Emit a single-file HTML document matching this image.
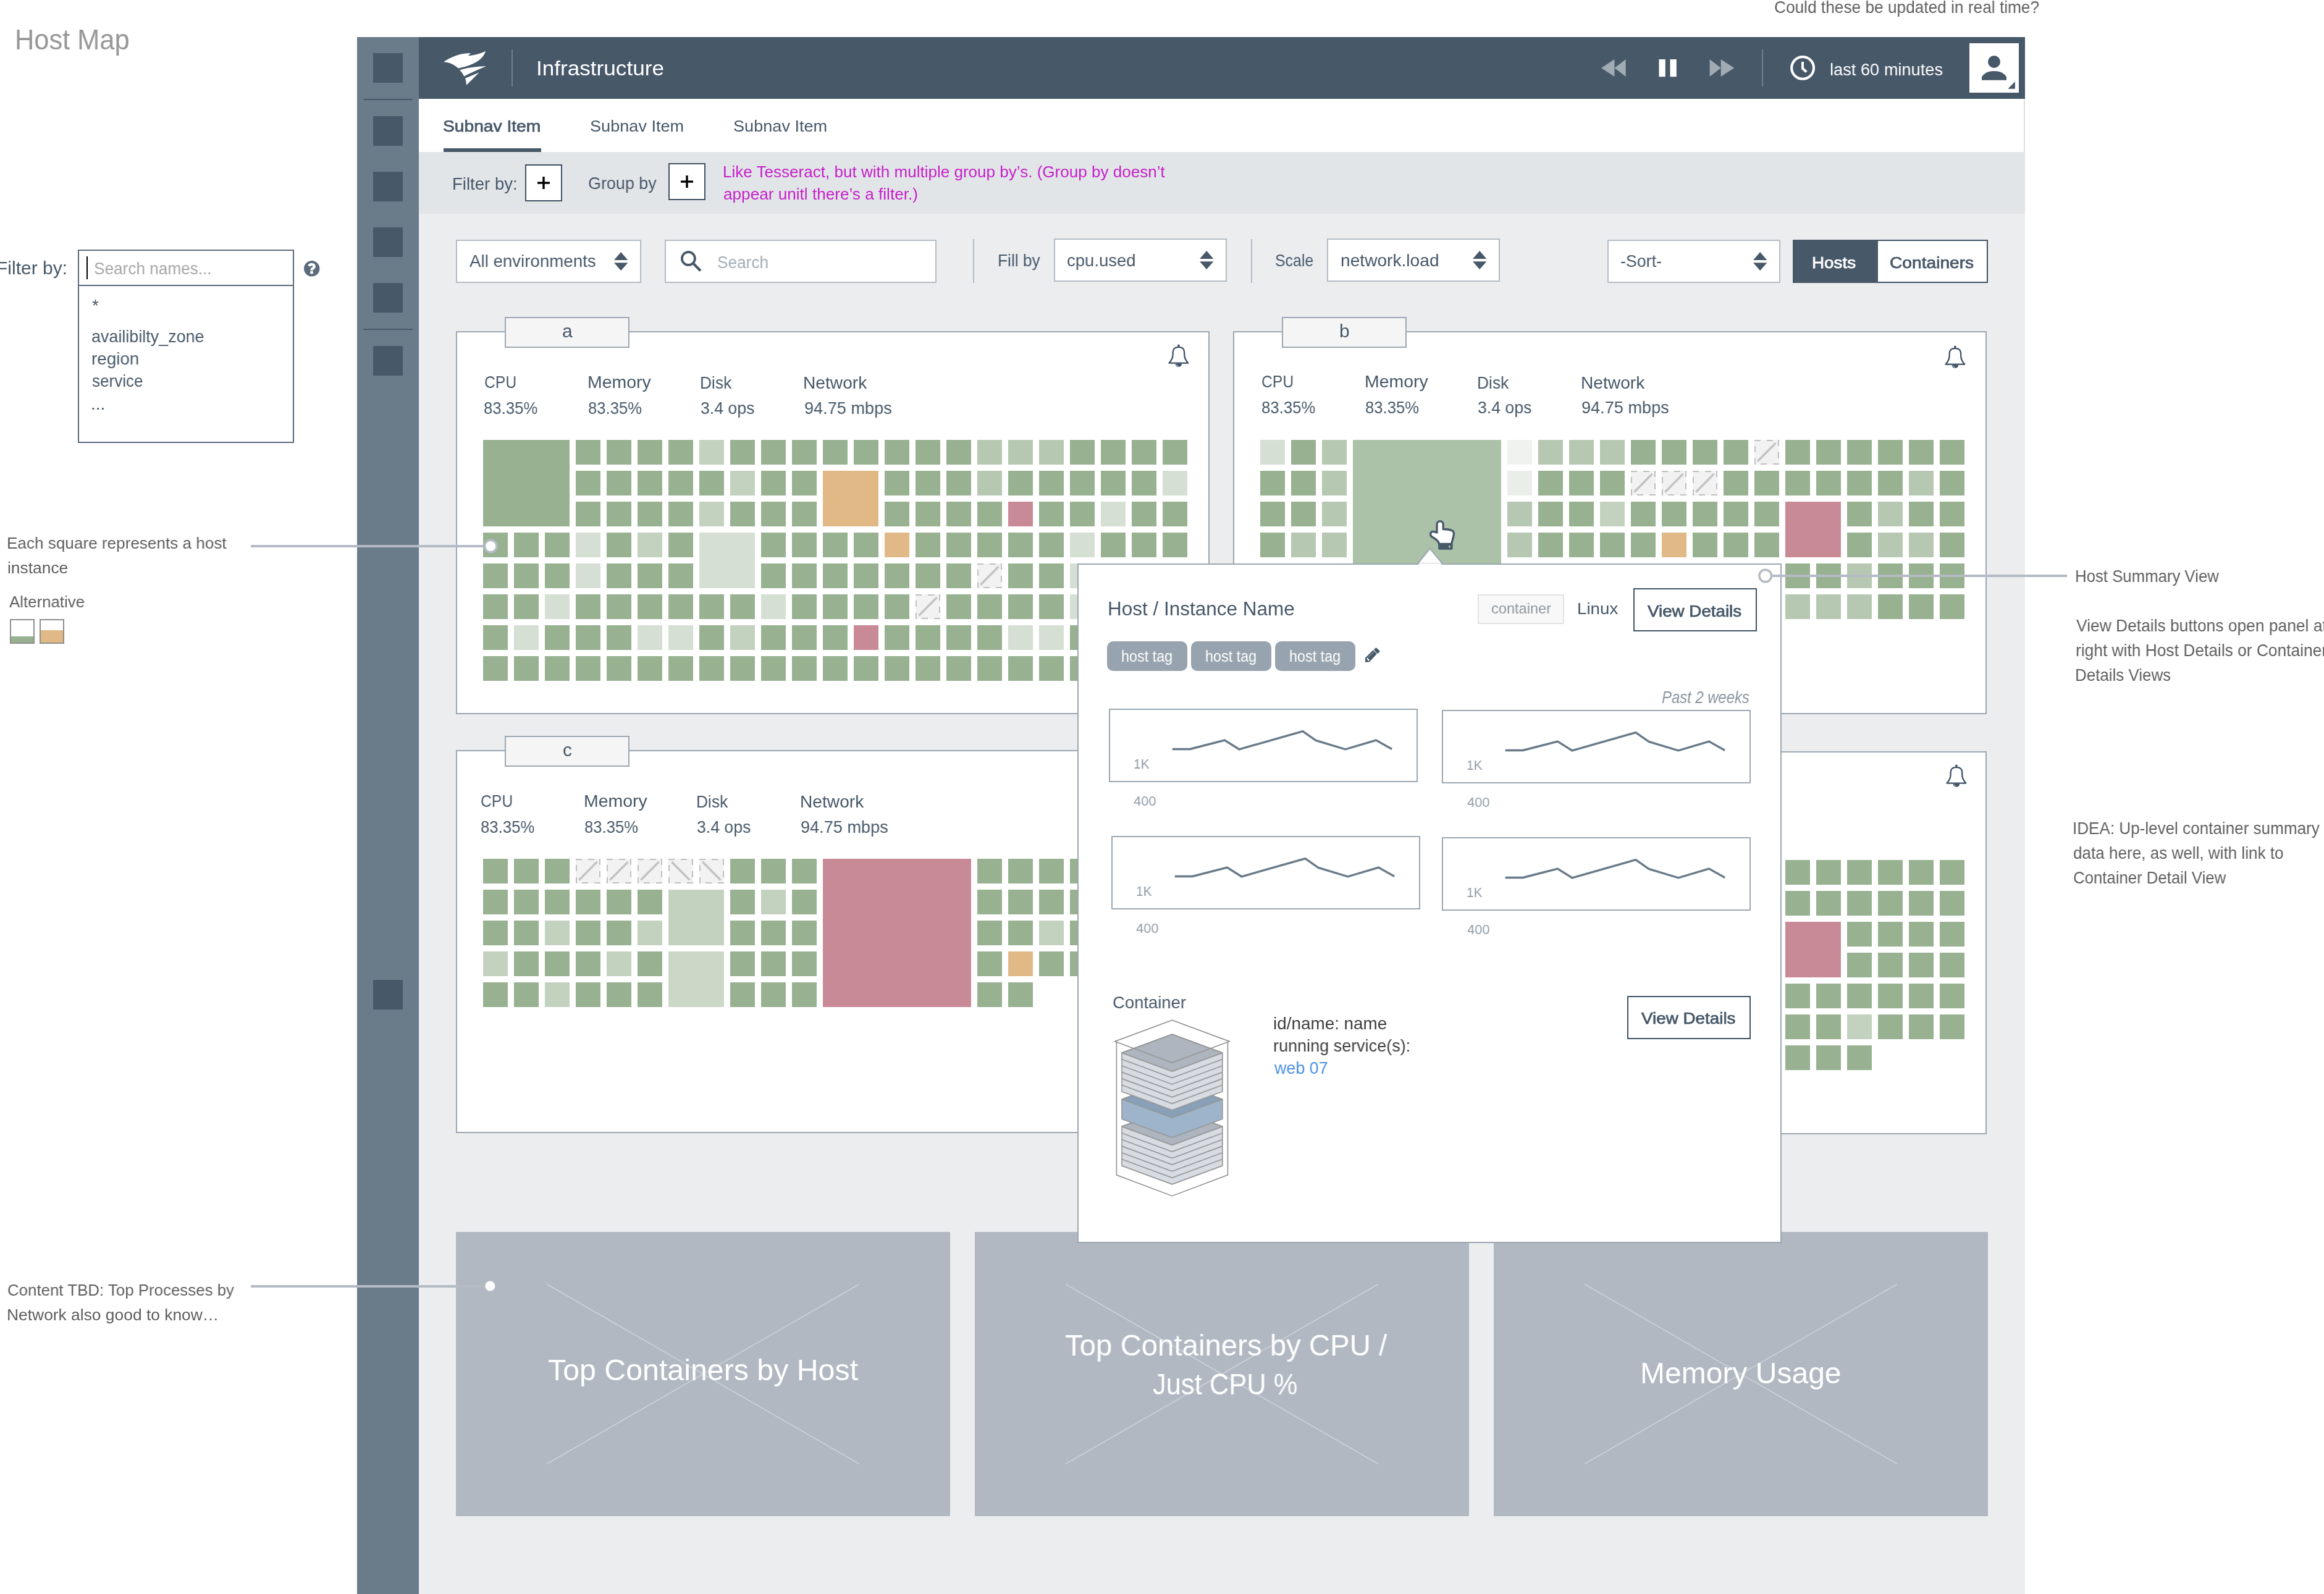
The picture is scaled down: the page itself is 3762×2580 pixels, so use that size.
<!DOCTYPE html>
<html><head><meta charset="utf-8"><title>Host Map</title>
<style>
html,body{margin:0;padding:0;}
body{width:3762px;height:2580px;position:relative;overflow:hidden;background:#fff;font-family:'Liberation Sans', sans-serif;}
.a{position:absolute;display:block;}
.t{position:absolute;white-space:nowrap;line-height:1;transform-origin:0 0;will-change:transform;}
</style></head><body>
<div class="a" style="left:578px;top:60px;width:100px;height:2520px;background:#6a7b8a;"></div>
<div class="a" style="left:604px;top:86px;width:48px;height:48px;background:#475869;"></div>
<div class="a" style="left:604px;top:188px;width:48px;height:48px;background:#475869;"></div>
<div class="a" style="left:604px;top:278px;width:48px;height:48px;background:#475869;"></div>
<div class="a" style="left:604px;top:368px;width:48px;height:48px;background:#475869;"></div>
<div class="a" style="left:604px;top:458px;width:48px;height:48px;background:#475869;"></div>
<div class="a" style="left:604px;top:560px;width:48px;height:48px;background:#475869;"></div>
<div class="a" style="left:604px;top:1586px;width:48px;height:48px;background:#475869;"></div>
<div class="a" style="left:588px;top:160px;width:80px;height:2px;background:#475869;"></div>
<div class="a" style="left:588px;top:532px;width:80px;height:2px;background:#475869;"></div>
<div class="a" style="left:678px;top:60px;width:2600px;height:100px;background:#475869;"></div>
<div class="a" style="left:678px;top:160px;width:2600px;height:86px;background:#ffffff;"></div>
<div class="a" style="left:3276px;top:160px;width:2px;height:86px;background:#dcdfe3;"></div>
<div class="a" style="left:678px;top:246px;width:2600px;height:100px;background:#e2e5e8;"></div>
<div class="a" style="left:678px;top:346px;width:2600px;height:2234px;background:#ebedef;"></div>
<svg class="a" style="left:700px;top:70px;" width="100" height="80" viewBox="0 0 100 80"><path fill="#fff" d="M18.2 30.3 C 30 22 45 16 62 16 L 57.8 20.3 C 70 19 80 16 86.4 12.4 C 80 30 62 36 41.7 40.6 C 36 35 28 31 18.2 30.3 Z"/><path fill="#fff" d="M44 43.4 C 60 39 75 37 87.1 37.2 C 75 42 62 48 51.3 53.4 C 49 49 47 46 44 43.4 Z"/><path fill="#fff" d="M53 56.8 L 75.7 47.2 L 55.1 67.8 C 55 64 54 60 53 56.8 Z"/></svg>
<div class="a" style="left:828px;top:80px;width:2px;height:60px;background:#6f7f8e;"></div>
<div class="t" id="t0" style="left:867.88px;top:93.77px;font-size:33.8px;color:#ffffff;transform:scaleX(1.0394);">Infrastructure</div>
<svg class="a" style="left:2592.3px;top:96px;" width="220" height="30" viewBox="0 0 220 30"><polygon fill="#a1abb4" points="0,14 21.5,0 21.5,28"/><polygon fill="#a1abb4" points="21.5,14 39.7,0 39.7,28"/><rect fill="#fff" x="93.5" y="0" width="10.3" height="28.2"/><rect fill="#fff" x="111.5" y="0" width="10.3" height="28.2"/><polygon fill="#a1abb4" points="175.6,0 193.7,14 175.6,28"/><polygon fill="#a1abb4" points="193.7,0 215.3,14 193.7,28"/></svg>
<div class="a" style="left:2852px;top:80px;width:2px;height:60px;background:#6f7f8e;"></div>
<svg class="a" style="left:2898px;top:90px;" width="40" height="40" viewBox="0 0 40 40"><circle cx="20.1" cy="19.9" r="17.9" fill="none" stroke="#fff" stroke-width="4.1"/><polyline points="20,9.9 20,20.8 26.3,26.4" fill="none" stroke="#fff" stroke-width="4"/></svg>
<div class="t" id="t1" style="left:2962.03px;top:97.93px;font-size:28.2px;color:#ffffff;transform:scaleX(0.9656);">last 60 minutes</div>
<div class="a" style="left:3188px;top:70px;width:80px;height:80px;background:#ffffff;"></div>
<svg class="a" style="left:3188px;top:70px;" width="80" height="80" viewBox="0 0 80 80"><circle cx="40" cy="30" r="10" fill="#475869"/><path fill="#475869" d="M20 54.6 C 24 48 31 45 40 45 C 49 45 56 48 60 54.6 L 60 59.8 L 20 59.8 Z"/><polygon fill="#475869" points="62.3,73.8 73.9,62.1 73.9,73.8"/></svg>
<div class="t" id="t2" style="left:716.94px;top:191.19px;font-size:26.6px;color:#475869;-webkit-text-stroke:0.75px currentColor;transform:scaleX(1.0601);">Subnav Item</div>
<div class="t" id="t3" style="left:954.98px;top:191.19px;font-size:26.6px;color:#475869;transform:scaleX(1.0194);">Subnav Item</div>
<div class="t" id="t4" style="left:1186.98px;top:191.19px;font-size:26.6px;color:#475869;transform:scaleX(1.0194);">Subnav Item</div>
<div class="a" style="left:718px;top:240px;width:158px;height:6px;background:#475869;"></div>
<div class="t" id="t5" style="left:732.00px;top:283.73px;font-size:27.5px;color:#475869;transform:scaleX(1.0020);">Filter by:</div>
<div class="a" style="left:850px;top:266px;width:60px;height:60px;background:#fff;border:2px solid #3e5266;box-sizing:border-box;"></div>
<svg class="a" style="left:870px;top:286px;" width="20" height="20" viewBox="0 0 20 20"><rect x="0" y="8.3" width="20" height="3.4" fill="#000"/><rect x="8.3" y="0" width="3.4" height="20" fill="#000"/></svg>
<div class="t" id="t6" style="left:952.02px;top:283.12px;font-size:27.5px;color:#475869;transform:scaleX(0.9790);">Group by</div>
<div class="a" style="left:1082px;top:264px;width:60px;height:60px;background:#fff;border:2px solid #3e5266;box-sizing:border-box;"></div>
<svg class="a" style="left:1102px;top:284px;" width="20" height="20" viewBox="0 0 20 20"><rect x="0" y="8.3" width="20" height="3.4" fill="#000"/><rect x="8.3" y="0" width="3.4" height="20" fill="#000"/></svg>
<div class="t" id="t7" style="left:1169.96px;top:266.32px;font-size:25.5px;color:#c61fca;transform:scaleX(1.0214);">Like Tesseract, but with multiple group by’s. (Group by doesn’t</div>
<div class="t" id="t8" style="left:1170.97px;top:301.82px;font-size:25.5px;color:#c61fca;transform:scaleX(1.0255);">appear unitl there’s a filter.)</div>
<div class="a" style="left:738px;top:388px;width:300px;height:70px;background:#fff;border:2px solid #b3bcc5;box-sizing:border-box;"></div>
<div class="t" id="t9" style="left:760.00px;top:409.10px;font-size:28px;color:#475869;transform:scaleX(0.9885);">All environments</div>
<svg class="a" style="left:993.8px;top:408px;" width="23" height="31" viewBox="0 0 23 31"><polygon fill="#475869" points="0,13 11.2,0 22.4,13"/><polygon fill="#475869" points="0,17.2 22.4,17.2 11.2,30"/></svg>
<div class="a" style="left:1076px;top:388px;width:440px;height:70px;background:#fff;border:2px solid #b3bcc5;box-sizing:border-box;"></div>
<svg class="a" style="left:1102px;top:406px;" width="36" height="36" viewBox="0 0 36 36"><circle cx="12.4" cy="12.4" r="10.5" fill="none" stroke="#475869" stroke-width="3.8"/><line x1="20" y1="20.3" x2="32" y2="32.3" stroke="#475869" stroke-width="4.2"/></svg>
<div class="t" id="t10" style="left:1161.06px;top:410.70px;font-size:28px;color:#a3adb7;transform:scaleX(0.9356);">Search</div>
<div class="a" style="left:1575px;top:387px;width:2px;height:71px;background:#b3bcc5;"></div>
<div class="t" id="t11" style="left:1615.09px;top:408.12px;font-size:27.5px;color:#475869;transform:scaleX(0.9563);">Fill by</div>
<div class="a" style="left:1706px;top:386px;width:280px;height:70px;background:#fff;border:2px solid #b3bcc5;box-sizing:border-box;"></div>
<div class="t" id="t12" style="left:1727.02px;top:407.70px;font-size:28px;color:#475869;transform:scaleX(0.9814);">cpu.used</div>
<svg class="a" style="left:1941.5px;top:406px;" width="23" height="31" viewBox="0 0 23 31"><polygon fill="#475869" points="0,13 11.2,0 22.4,13"/><polygon fill="#475869" points="0,17.2 22.4,17.2 11.2,30"/></svg>
<div class="a" style="left:2025px;top:387px;width:2px;height:71px;background:#b3bcc5;"></div>
<div class="t" id="t13" style="left:2063.70px;top:408.12px;font-size:27.5px;color:#475869;transform:scaleX(0.9038);">Scale</div>
<div class="a" style="left:2148px;top:386px;width:280px;height:70px;background:#fff;border:2px solid #b3bcc5;box-sizing:border-box;"></div>
<div class="t" id="t14" style="left:2169.59px;top:407.70px;font-size:28px;color:#475869;transform:scaleX(1.0052);">network.load</div>
<svg class="a" style="left:2383.6px;top:406px;" width="23" height="31" viewBox="0 0 23 31"><polygon fill="#475869" points="0,13 11.2,0 22.4,13"/><polygon fill="#475869" points="0,17.2 22.4,17.2 11.2,30"/></svg>
<div class="a" style="left:2602px;top:388px;width:280px;height:70px;background:#fff;border:2px solid #b3bcc5;box-sizing:border-box;"></div>
<div class="t" id="t15" style="left:2623.04px;top:408.70px;font-size:28px;color:#475869;transform:scaleX(0.9567);">-Sort-</div>
<svg class="a" style="left:2837.5px;top:408px;" width="23" height="31" viewBox="0 0 23 31"><polygon fill="#475869" points="0,13 11.2,0 22.4,13"/><polygon fill="#475869" points="0,17.2 22.4,17.2 11.2,30"/></svg>
<div class="a" style="left:2902px;top:388px;width:316px;height:70px;background:#fff;border:2px solid #3e5266;box-sizing:border-box;"></div>
<div class="a" style="left:2902px;top:388px;width:138px;height:70px;background:#475869;"></div>
<div class="t" id="t16" style="left:2932.87px;top:411.83px;font-size:26.2px;color:#ffffff;-webkit-text-stroke:0.75px currentColor;transform:scaleX(1.0641);">Hosts</div>
<div class="t" id="t17" style="left:3058.92px;top:411.83px;font-size:26.2px;color:#475869;-webkit-text-stroke:0.75px currentColor;transform:scaleX(1.0753);">Containers</div>
<div class="a" style="left:738px;top:536px;width:1220px;height:620px;background:#fff;border:2px solid #9ba7b2;box-sizing:border-box;"></div>
<div class="a" style="left:817px;top:513px;width:202px;height:50px;background:#f5f5f5;border:2px solid #9ba7b2;box-sizing:border-box;"></div>
<div class="t" id="t18" style="left:909.66px;top:521.40px;font-size:30px;color:#475869;">a</div>
<svg class="a" style="left:1880px;top:550px;" width="56" height="50" viewBox="0 0 56 50"><path d="M12.5 37.6 Q 18.6 31 18.6 24 L 18.6 20.5 Q 18.6 11.9 27.9 11.9 Q 37.2 11.9 37.2 20.5 L 37.2 24 Q 37.2 31 43.3 37.6 Z" fill="none" stroke="#3f5266" stroke-width="2.3" stroke-linejoin="round"/><circle cx="27.9" cy="9.3" r="1.9" fill="#3f5266"/><path d="M22.6 38.5 A 5.3 5.3 0 0 0 33.2 38.5 Z" fill="#3f5266"/><path d="M24.3 39.6 Q 24.9 41.9 27.4 42.4" fill="none" stroke="#fff" stroke-width="0.8"/></svg>
<div class="t" id="t19" style="left:783.50px;top:604.62px;font-size:27.5px;color:#475869;transform:scaleX(0.8985);">CPU</div>
<div class="t" id="t20" style="left:783.46px;top:646.82px;font-size:27.5px;color:#475869;transform:scaleX(0.9366);">83.35%</div>
<div class="t" id="t21" style="left:950.63px;top:604.62px;font-size:27.5px;color:#475869;transform:scaleX(1.0352);">Memory</div>
<div class="t" id="t22" style="left:951.77px;top:646.82px;font-size:27.5px;color:#475869;transform:scaleX(0.9334);">83.35%</div>
<div class="t" id="t23" style="left:1132.88px;top:606.42px;font-size:27.5px;color:#475869;transform:scaleX(0.9590);">Disk</div>
<div class="t" id="t24" style="left:1133.83px;top:646.82px;font-size:27.5px;color:#475869;transform:scaleX(0.9688);">3.4 ops</div>
<div class="t" id="t25" style="left:1300.45px;top:606.42px;font-size:27.5px;color:#475869;transform:scaleX(1.0242);">Network</div>
<div class="t" id="t26" style="left:1301.51px;top:646.82px;font-size:27.5px;color:#475869;transform:scaleX(0.9862);">94.75 mbps</div>
<div class="a" style="left:782px;top:712px;width:140px;height:140px;background:#97b191;"></div>
<div class="a" style="left:1132px;top:712px;width:40px;height:40px;background:#c3d1bf;"></div>
<div class="a" style="left:1582px;top:712px;width:40px;height:40px;background:#b6c8b2;"></div>
<div class="a" style="left:1632px;top:712px;width:40px;height:40px;background:#b6c8b2;"></div>
<div class="a" style="left:1682px;top:712px;width:40px;height:40px;background:#b6c8b2;"></div>
<div class="a" style="left:1182px;top:762px;width:40px;height:40px;background:#c3d1bf;"></div>
<div class="a" style="left:1332px;top:762px;width:90px;height:90px;background:#e0b987;"></div>
<div class="a" style="left:1582px;top:762px;width:40px;height:40px;background:#b6c8b2;"></div>
<div class="a" style="left:1882px;top:762px;width:40px;height:40px;background:#d5dfd3;"></div>
<div class="a" style="left:1132px;top:812px;width:40px;height:40px;background:#c3d1bf;"></div>
<div class="a" style="left:1632px;top:812px;width:40px;height:40px;background:#c98a98;"></div>
<div class="a" style="left:1782px;top:812px;width:40px;height:40px;background:#d5dfd3;"></div>
<div class="a" style="left:932px;top:862px;width:40px;height:40px;background:#d5dfd3;"></div>
<div class="a" style="left:1032px;top:862px;width:40px;height:40px;background:#c3d1bf;"></div>
<div class="a" style="left:1132px;top:862px;width:90px;height:90px;background:#d5dfd3;"></div>
<div class="a" style="left:1432px;top:862px;width:40px;height:40px;background:#e0b987;"></div>
<div class="a" style="left:1732px;top:862px;width:40px;height:40px;background:#d5dfd3;"></div>
<div class="a" style="left:932px;top:912px;width:40px;height:40px;background:#d5dfd3;"></div>
<svg class="a" style="left:1582px;top:912px;" width="40" height="40" viewBox="0 0 40 40"><rect x="0" y="0" width="40" height="40" fill="#f2f2f2"/><line x1="0" y1="1" x2="40" y2="1" stroke="#bfbfbf" stroke-width="2" stroke-dasharray="10 10"/><line x1="39" y1="0" x2="39" y2="40" stroke="#bfbfbf" stroke-width="2" stroke-dasharray="10 10"/><line x1="40" y1="39" x2="0" y2="39" stroke="#bfbfbf" stroke-width="2" stroke-dasharray="10 10"/><line x1="1" y1="40" x2="1" y2="0" stroke="#bfbfbf" stroke-width="2" stroke-dasharray="10 10"/><line x1="5.3" y1="34.5" x2="34.5" y2="5" stroke="#c3c3c3" stroke-width="3.5"/></svg>
<div class="a" style="left:1732px;top:912px;width:40px;height:40px;background:#d5dfd3;"></div>
<div class="a" style="left:882px;top:962px;width:40px;height:40px;background:#d5dfd3;"></div>
<div class="a" style="left:1232px;top:962px;width:40px;height:40px;background:#d5dfd3;"></div>
<svg class="a" style="left:1482px;top:962px;" width="40" height="40" viewBox="0 0 40 40"><rect x="0" y="0" width="40" height="40" fill="#f2f2f2"/><line x1="0" y1="1" x2="40" y2="1" stroke="#bfbfbf" stroke-width="2" stroke-dasharray="10 10"/><line x1="39" y1="0" x2="39" y2="40" stroke="#bfbfbf" stroke-width="2" stroke-dasharray="10 10"/><line x1="40" y1="39" x2="0" y2="39" stroke="#bfbfbf" stroke-width="2" stroke-dasharray="10 10"/><line x1="1" y1="40" x2="1" y2="0" stroke="#bfbfbf" stroke-width="2" stroke-dasharray="10 10"/><line x1="5.3" y1="34.5" x2="34.5" y2="5" stroke="#c3c3c3" stroke-width="3.5"/></svg>
<div class="a" style="left:1732px;top:962px;width:40px;height:40px;background:#d5dfd3;"></div>
<div class="a" style="left:832px;top:1012px;width:40px;height:40px;background:#d5dfd3;"></div>
<div class="a" style="left:1032px;top:1012px;width:40px;height:40px;background:#d5dfd3;"></div>
<div class="a" style="left:1082px;top:1012px;width:40px;height:40px;background:#d5dfd3;"></div>
<div class="a" style="left:1182px;top:1012px;width:40px;height:40px;background:#c3d1bf;"></div>
<div class="a" style="left:1382px;top:1012px;width:40px;height:40px;background:#c98a98;"></div>
<div class="a" style="left:1632px;top:1012px;width:40px;height:40px;background:#d5dfd3;"></div>
<div class="a" style="left:1682px;top:1012px;width:40px;height:40px;background:#d5dfd3;"></div>
<div class="a" style="left:932px;top:712px;width:40px;height:40px;background:#97b191;"></div>
<div class="a" style="left:982px;top:712px;width:40px;height:40px;background:#97b191;"></div>
<div class="a" style="left:1032px;top:712px;width:40px;height:40px;background:#97b191;"></div>
<div class="a" style="left:1082px;top:712px;width:40px;height:40px;background:#97b191;"></div>
<div class="a" style="left:1182px;top:712px;width:40px;height:40px;background:#97b191;"></div>
<div class="a" style="left:1232px;top:712px;width:40px;height:40px;background:#97b191;"></div>
<div class="a" style="left:1282px;top:712px;width:40px;height:40px;background:#97b191;"></div>
<div class="a" style="left:1332px;top:712px;width:40px;height:40px;background:#97b191;"></div>
<div class="a" style="left:1382px;top:712px;width:40px;height:40px;background:#97b191;"></div>
<div class="a" style="left:1432px;top:712px;width:40px;height:40px;background:#97b191;"></div>
<div class="a" style="left:1482px;top:712px;width:40px;height:40px;background:#97b191;"></div>
<div class="a" style="left:1532px;top:712px;width:40px;height:40px;background:#97b191;"></div>
<div class="a" style="left:1732px;top:712px;width:40px;height:40px;background:#97b191;"></div>
<div class="a" style="left:1782px;top:712px;width:40px;height:40px;background:#97b191;"></div>
<div class="a" style="left:1832px;top:712px;width:40px;height:40px;background:#97b191;"></div>
<div class="a" style="left:1882px;top:712px;width:40px;height:40px;background:#97b191;"></div>
<div class="a" style="left:932px;top:762px;width:40px;height:40px;background:#97b191;"></div>
<div class="a" style="left:982px;top:762px;width:40px;height:40px;background:#97b191;"></div>
<div class="a" style="left:1032px;top:762px;width:40px;height:40px;background:#97b191;"></div>
<div class="a" style="left:1082px;top:762px;width:40px;height:40px;background:#97b191;"></div>
<div class="a" style="left:1132px;top:762px;width:40px;height:40px;background:#97b191;"></div>
<div class="a" style="left:1232px;top:762px;width:40px;height:40px;background:#97b191;"></div>
<div class="a" style="left:1282px;top:762px;width:40px;height:40px;background:#97b191;"></div>
<div class="a" style="left:1432px;top:762px;width:40px;height:40px;background:#97b191;"></div>
<div class="a" style="left:1482px;top:762px;width:40px;height:40px;background:#97b191;"></div>
<div class="a" style="left:1532px;top:762px;width:40px;height:40px;background:#97b191;"></div>
<div class="a" style="left:1632px;top:762px;width:40px;height:40px;background:#97b191;"></div>
<div class="a" style="left:1682px;top:762px;width:40px;height:40px;background:#97b191;"></div>
<div class="a" style="left:1732px;top:762px;width:40px;height:40px;background:#97b191;"></div>
<div class="a" style="left:1782px;top:762px;width:40px;height:40px;background:#97b191;"></div>
<div class="a" style="left:1832px;top:762px;width:40px;height:40px;background:#97b191;"></div>
<div class="a" style="left:932px;top:812px;width:40px;height:40px;background:#97b191;"></div>
<div class="a" style="left:982px;top:812px;width:40px;height:40px;background:#97b191;"></div>
<div class="a" style="left:1032px;top:812px;width:40px;height:40px;background:#97b191;"></div>
<div class="a" style="left:1082px;top:812px;width:40px;height:40px;background:#97b191;"></div>
<div class="a" style="left:1182px;top:812px;width:40px;height:40px;background:#97b191;"></div>
<div class="a" style="left:1232px;top:812px;width:40px;height:40px;background:#97b191;"></div>
<div class="a" style="left:1282px;top:812px;width:40px;height:40px;background:#97b191;"></div>
<div class="a" style="left:1432px;top:812px;width:40px;height:40px;background:#97b191;"></div>
<div class="a" style="left:1482px;top:812px;width:40px;height:40px;background:#97b191;"></div>
<div class="a" style="left:1532px;top:812px;width:40px;height:40px;background:#97b191;"></div>
<div class="a" style="left:1582px;top:812px;width:40px;height:40px;background:#97b191;"></div>
<div class="a" style="left:1682px;top:812px;width:40px;height:40px;background:#97b191;"></div>
<div class="a" style="left:1732px;top:812px;width:40px;height:40px;background:#97b191;"></div>
<div class="a" style="left:1832px;top:812px;width:40px;height:40px;background:#97b191;"></div>
<div class="a" style="left:1882px;top:812px;width:40px;height:40px;background:#97b191;"></div>
<div class="a" style="left:782px;top:862px;width:40px;height:40px;background:#97b191;"></div>
<div class="a" style="left:832px;top:862px;width:40px;height:40px;background:#97b191;"></div>
<div class="a" style="left:882px;top:862px;width:40px;height:40px;background:#97b191;"></div>
<div class="a" style="left:982px;top:862px;width:40px;height:40px;background:#97b191;"></div>
<div class="a" style="left:1082px;top:862px;width:40px;height:40px;background:#97b191;"></div>
<div class="a" style="left:1232px;top:862px;width:40px;height:40px;background:#97b191;"></div>
<div class="a" style="left:1282px;top:862px;width:40px;height:40px;background:#97b191;"></div>
<div class="a" style="left:1332px;top:862px;width:40px;height:40px;background:#97b191;"></div>
<div class="a" style="left:1382px;top:862px;width:40px;height:40px;background:#97b191;"></div>
<div class="a" style="left:1482px;top:862px;width:40px;height:40px;background:#97b191;"></div>
<div class="a" style="left:1532px;top:862px;width:40px;height:40px;background:#97b191;"></div>
<div class="a" style="left:1582px;top:862px;width:40px;height:40px;background:#97b191;"></div>
<div class="a" style="left:1632px;top:862px;width:40px;height:40px;background:#97b191;"></div>
<div class="a" style="left:1682px;top:862px;width:40px;height:40px;background:#97b191;"></div>
<div class="a" style="left:1782px;top:862px;width:40px;height:40px;background:#97b191;"></div>
<div class="a" style="left:1832px;top:862px;width:40px;height:40px;background:#97b191;"></div>
<div class="a" style="left:1882px;top:862px;width:40px;height:40px;background:#97b191;"></div>
<div class="a" style="left:782px;top:912px;width:40px;height:40px;background:#97b191;"></div>
<div class="a" style="left:832px;top:912px;width:40px;height:40px;background:#97b191;"></div>
<div class="a" style="left:882px;top:912px;width:40px;height:40px;background:#97b191;"></div>
<div class="a" style="left:982px;top:912px;width:40px;height:40px;background:#97b191;"></div>
<div class="a" style="left:1032px;top:912px;width:40px;height:40px;background:#97b191;"></div>
<div class="a" style="left:1082px;top:912px;width:40px;height:40px;background:#97b191;"></div>
<div class="a" style="left:1232px;top:912px;width:40px;height:40px;background:#97b191;"></div>
<div class="a" style="left:1282px;top:912px;width:40px;height:40px;background:#97b191;"></div>
<div class="a" style="left:1332px;top:912px;width:40px;height:40px;background:#97b191;"></div>
<div class="a" style="left:1382px;top:912px;width:40px;height:40px;background:#97b191;"></div>
<div class="a" style="left:1432px;top:912px;width:40px;height:40px;background:#97b191;"></div>
<div class="a" style="left:1482px;top:912px;width:40px;height:40px;background:#97b191;"></div>
<div class="a" style="left:1532px;top:912px;width:40px;height:40px;background:#97b191;"></div>
<div class="a" style="left:1632px;top:912px;width:40px;height:40px;background:#97b191;"></div>
<div class="a" style="left:1682px;top:912px;width:40px;height:40px;background:#97b191;"></div>
<div class="a" style="left:1782px;top:912px;width:40px;height:40px;background:#97b191;"></div>
<div class="a" style="left:1832px;top:912px;width:40px;height:40px;background:#97b191;"></div>
<div class="a" style="left:1882px;top:912px;width:40px;height:40px;background:#97b191;"></div>
<div class="a" style="left:782px;top:962px;width:40px;height:40px;background:#97b191;"></div>
<div class="a" style="left:832px;top:962px;width:40px;height:40px;background:#97b191;"></div>
<div class="a" style="left:932px;top:962px;width:40px;height:40px;background:#97b191;"></div>
<div class="a" style="left:982px;top:962px;width:40px;height:40px;background:#97b191;"></div>
<div class="a" style="left:1032px;top:962px;width:40px;height:40px;background:#97b191;"></div>
<div class="a" style="left:1082px;top:962px;width:40px;height:40px;background:#97b191;"></div>
<div class="a" style="left:1132px;top:962px;width:40px;height:40px;background:#97b191;"></div>
<div class="a" style="left:1182px;top:962px;width:40px;height:40px;background:#97b191;"></div>
<div class="a" style="left:1282px;top:962px;width:40px;height:40px;background:#97b191;"></div>
<div class="a" style="left:1332px;top:962px;width:40px;height:40px;background:#97b191;"></div>
<div class="a" style="left:1382px;top:962px;width:40px;height:40px;background:#97b191;"></div>
<div class="a" style="left:1432px;top:962px;width:40px;height:40px;background:#97b191;"></div>
<div class="a" style="left:1532px;top:962px;width:40px;height:40px;background:#97b191;"></div>
<div class="a" style="left:1582px;top:962px;width:40px;height:40px;background:#97b191;"></div>
<div class="a" style="left:1632px;top:962px;width:40px;height:40px;background:#97b191;"></div>
<div class="a" style="left:1682px;top:962px;width:40px;height:40px;background:#97b191;"></div>
<div class="a" style="left:1782px;top:962px;width:40px;height:40px;background:#97b191;"></div>
<div class="a" style="left:1832px;top:962px;width:40px;height:40px;background:#97b191;"></div>
<div class="a" style="left:1882px;top:962px;width:40px;height:40px;background:#97b191;"></div>
<div class="a" style="left:782px;top:1012px;width:40px;height:40px;background:#97b191;"></div>
<div class="a" style="left:882px;top:1012px;width:40px;height:40px;background:#97b191;"></div>
<div class="a" style="left:932px;top:1012px;width:40px;height:40px;background:#97b191;"></div>
<div class="a" style="left:982px;top:1012px;width:40px;height:40px;background:#97b191;"></div>
<div class="a" style="left:1132px;top:1012px;width:40px;height:40px;background:#97b191;"></div>
<div class="a" style="left:1232px;top:1012px;width:40px;height:40px;background:#97b191;"></div>
<div class="a" style="left:1282px;top:1012px;width:40px;height:40px;background:#97b191;"></div>
<div class="a" style="left:1332px;top:1012px;width:40px;height:40px;background:#97b191;"></div>
<div class="a" style="left:1432px;top:1012px;width:40px;height:40px;background:#97b191;"></div>
<div class="a" style="left:1482px;top:1012px;width:40px;height:40px;background:#97b191;"></div>
<div class="a" style="left:1532px;top:1012px;width:40px;height:40px;background:#97b191;"></div>
<div class="a" style="left:1582px;top:1012px;width:40px;height:40px;background:#97b191;"></div>
<div class="a" style="left:1732px;top:1012px;width:40px;height:40px;background:#97b191;"></div>
<div class="a" style="left:1782px;top:1012px;width:40px;height:40px;background:#97b191;"></div>
<div class="a" style="left:1832px;top:1012px;width:40px;height:40px;background:#97b191;"></div>
<div class="a" style="left:1882px;top:1012px;width:40px;height:40px;background:#97b191;"></div>
<div class="a" style="left:782px;top:1062px;width:40px;height:40px;background:#97b191;"></div>
<div class="a" style="left:832px;top:1062px;width:40px;height:40px;background:#97b191;"></div>
<div class="a" style="left:882px;top:1062px;width:40px;height:40px;background:#97b191;"></div>
<div class="a" style="left:932px;top:1062px;width:40px;height:40px;background:#97b191;"></div>
<div class="a" style="left:982px;top:1062px;width:40px;height:40px;background:#97b191;"></div>
<div class="a" style="left:1032px;top:1062px;width:40px;height:40px;background:#97b191;"></div>
<div class="a" style="left:1082px;top:1062px;width:40px;height:40px;background:#97b191;"></div>
<div class="a" style="left:1132px;top:1062px;width:40px;height:40px;background:#97b191;"></div>
<div class="a" style="left:1182px;top:1062px;width:40px;height:40px;background:#97b191;"></div>
<div class="a" style="left:1232px;top:1062px;width:40px;height:40px;background:#97b191;"></div>
<div class="a" style="left:1282px;top:1062px;width:40px;height:40px;background:#97b191;"></div>
<div class="a" style="left:1332px;top:1062px;width:40px;height:40px;background:#97b191;"></div>
<div class="a" style="left:1382px;top:1062px;width:40px;height:40px;background:#97b191;"></div>
<div class="a" style="left:1432px;top:1062px;width:40px;height:40px;background:#97b191;"></div>
<div class="a" style="left:1482px;top:1062px;width:40px;height:40px;background:#97b191;"></div>
<div class="a" style="left:1532px;top:1062px;width:40px;height:40px;background:#97b191;"></div>
<div class="a" style="left:1582px;top:1062px;width:40px;height:40px;background:#97b191;"></div>
<div class="a" style="left:1632px;top:1062px;width:40px;height:40px;background:#97b191;"></div>
<div class="a" style="left:1682px;top:1062px;width:40px;height:40px;background:#97b191;"></div>
<div class="a" style="left:1732px;top:1062px;width:40px;height:40px;background:#97b191;"></div>
<div class="a" style="left:1782px;top:1062px;width:40px;height:40px;background:#97b191;"></div>
<div class="a" style="left:1832px;top:1062px;width:40px;height:40px;background:#97b191;"></div>
<div class="a" style="left:1882px;top:1062px;width:40px;height:40px;background:#97b191;"></div>
<div class="a" style="left:1996px;top:536px;width:1220px;height:620px;background:#fff;border:2px solid #9ba7b2;box-sizing:border-box;"></div>
<div class="a" style="left:2075px;top:513px;width:202px;height:50px;background:#f5f5f5;border:2px solid #9ba7b2;box-sizing:border-box;"></div>
<div class="t" id="t27" style="left:2167.66px;top:521.40px;font-size:30px;color:#475869;">b</div>
<svg class="a" style="left:3137px;top:552px;" width="56" height="50" viewBox="0 0 56 50"><path d="M12.5 37.6 Q 18.6 31 18.6 24 L 18.6 20.5 Q 18.6 11.9 27.9 11.9 Q 37.2 11.9 37.2 20.5 L 37.2 24 Q 37.2 31 43.3 37.6 Z" fill="none" stroke="#3f5266" stroke-width="2.3" stroke-linejoin="round"/><circle cx="27.9" cy="9.3" r="1.9" fill="#3f5266"/><path d="M22.6 38.5 A 5.3 5.3 0 0 0 33.2 38.5 Z" fill="#3f5266"/><path d="M24.3 39.6 Q 24.9 41.9 27.4 42.4" fill="none" stroke="#fff" stroke-width="0.8"/></svg>
<div class="t" id="t28" style="left:2041.80px;top:604.12px;font-size:27.5px;color:#475869;transform:scaleX(0.8985);">CPU</div>
<div class="t" id="t29" style="left:2041.76px;top:646.32px;font-size:27.5px;color:#475869;transform:scaleX(0.9366);">83.35%</div>
<div class="t" id="t30" style="left:2208.93px;top:604.12px;font-size:27.5px;color:#475869;transform:scaleX(1.0352);">Memory</div>
<div class="t" id="t31" style="left:2210.07px;top:646.32px;font-size:27.5px;color:#475869;transform:scaleX(0.9334);">83.35%</div>
<div class="t" id="t32" style="left:2391.18px;top:605.92px;font-size:27.5px;color:#475869;transform:scaleX(0.9590);">Disk</div>
<div class="t" id="t33" style="left:2392.13px;top:646.32px;font-size:27.5px;color:#475869;transform:scaleX(0.9688);">3.4 ops</div>
<div class="t" id="t34" style="left:2558.75px;top:605.92px;font-size:27.5px;color:#475869;transform:scaleX(1.0242);">Network</div>
<div class="t" id="t35" style="left:2559.81px;top:646.32px;font-size:27.5px;color:#475869;transform:scaleX(0.9862);">94.75 mbps</div>
<div class="a" style="left:2040px;top:712px;width:40px;height:40px;background:#d5dfd3;"></div>
<div class="a" style="left:2140px;top:712px;width:40px;height:40px;background:#b6c8b2;"></div>
<div class="a" style="left:2140px;top:762px;width:40px;height:40px;background:#b6c8b2;"></div>
<div class="a" style="left:2140px;top:812px;width:40px;height:40px;background:#b6c8b2;"></div>
<div class="a" style="left:2090px;top:862px;width:40px;height:40px;background:#b6c8b2;"></div>
<div class="a" style="left:2140px;top:862px;width:40px;height:40px;background:#b6c8b2;"></div>
<div class="a" style="left:2190px;top:712px;width:240px;height:240px;background:#abc2a9;"></div>
<div class="a" style="left:2440px;top:712px;width:40px;height:40px;background:#eff2ee;"></div>
<div class="a" style="left:2440px;top:762px;width:40px;height:40px;background:#e9eee8;"></div>
<div class="a" style="left:2440px;top:812px;width:40px;height:40px;background:#b6c8b2;"></div>
<div class="a" style="left:2440px;top:862px;width:40px;height:40px;background:#b6c8b2;"></div>
<div class="a" style="left:2490px;top:712px;width:40px;height:40px;background:#b6c8b2;"></div>
<div class="a" style="left:2540px;top:712px;width:40px;height:40px;background:#b6c8b2;"></div>
<div class="a" style="left:2590px;top:712px;width:40px;height:40px;background:#b6c8b2;"></div>
<div class="a" style="left:2590px;top:812px;width:40px;height:40px;background:#c3d1bf;"></div>
<svg class="a" style="left:2640px;top:762px;" width="40" height="40" viewBox="0 0 40 40"><rect x="0" y="0" width="40" height="40" fill="#f2f2f2"/><line x1="0" y1="1" x2="40" y2="1" stroke="#bfbfbf" stroke-width="2" stroke-dasharray="10 10"/><line x1="39" y1="0" x2="39" y2="40" stroke="#bfbfbf" stroke-width="2" stroke-dasharray="10 10"/><line x1="40" y1="39" x2="0" y2="39" stroke="#bfbfbf" stroke-width="2" stroke-dasharray="10 10"/><line x1="1" y1="40" x2="1" y2="0" stroke="#bfbfbf" stroke-width="2" stroke-dasharray="10 10"/><line x1="5.3" y1="34.5" x2="34.5" y2="5" stroke="#c3c3c3" stroke-width="3.5"/></svg>
<svg class="a" style="left:2690px;top:762px;" width="40" height="40" viewBox="0 0 40 40"><rect x="0" y="0" width="40" height="40" fill="#f2f2f2"/><line x1="0" y1="1" x2="40" y2="1" stroke="#bfbfbf" stroke-width="2" stroke-dasharray="10 10"/><line x1="39" y1="0" x2="39" y2="40" stroke="#bfbfbf" stroke-width="2" stroke-dasharray="10 10"/><line x1="40" y1="39" x2="0" y2="39" stroke="#bfbfbf" stroke-width="2" stroke-dasharray="10 10"/><line x1="1" y1="40" x2="1" y2="0" stroke="#bfbfbf" stroke-width="2" stroke-dasharray="10 10"/><line x1="5.3" y1="34.5" x2="34.5" y2="5" stroke="#c3c3c3" stroke-width="3.5"/></svg>
<svg class="a" style="left:2740px;top:762px;" width="40" height="40" viewBox="0 0 40 40"><rect x="0" y="0" width="40" height="40" fill="#f2f2f2"/><line x1="0" y1="1" x2="40" y2="1" stroke="#bfbfbf" stroke-width="2" stroke-dasharray="10 10"/><line x1="39" y1="0" x2="39" y2="40" stroke="#bfbfbf" stroke-width="2" stroke-dasharray="10 10"/><line x1="40" y1="39" x2="0" y2="39" stroke="#bfbfbf" stroke-width="2" stroke-dasharray="10 10"/><line x1="1" y1="40" x2="1" y2="0" stroke="#bfbfbf" stroke-width="2" stroke-dasharray="10 10"/><line x1="5.3" y1="34.5" x2="34.5" y2="5" stroke="#c3c3c3" stroke-width="3.5"/></svg>
<div class="a" style="left:2690px;top:862px;width:40px;height:40px;background:#e0b987;"></div>
<svg class="a" style="left:2840px;top:712px;" width="40" height="40" viewBox="0 0 40 40"><rect x="0" y="0" width="40" height="40" fill="#f2f2f2"/><line x1="0" y1="1" x2="40" y2="1" stroke="#bfbfbf" stroke-width="2" stroke-dasharray="10 10"/><line x1="39" y1="0" x2="39" y2="40" stroke="#bfbfbf" stroke-width="2" stroke-dasharray="10 10"/><line x1="40" y1="39" x2="0" y2="39" stroke="#bfbfbf" stroke-width="2" stroke-dasharray="10 10"/><line x1="1" y1="40" x2="1" y2="0" stroke="#bfbfbf" stroke-width="2" stroke-dasharray="10 10"/><line x1="5.3" y1="34.5" x2="34.5" y2="5" stroke="#c3c3c3" stroke-width="3.5"/></svg>
<div class="a" style="left:2890px;top:812px;width:90px;height:90px;background:#c98a98;"></div>
<div class="a" style="left:3040px;top:812px;width:40px;height:40px;background:#b6c8b2;"></div>
<div class="a" style="left:3040px;top:862px;width:40px;height:40px;background:#b6c8b2;"></div>
<div class="a" style="left:3090px;top:762px;width:40px;height:40px;background:#b6c8b2;"></div>
<div class="a" style="left:3090px;top:862px;width:40px;height:40px;background:#b6c8b2;"></div>
<div class="a" style="left:2990px;top:912px;width:40px;height:40px;background:#b6c8b2;"></div>
<div class="a" style="left:2890px;top:962px;width:40px;height:40px;background:#b6c8b2;"></div>
<div class="a" style="left:2940px;top:962px;width:40px;height:40px;background:#b6c8b2;"></div>
<div class="a" style="left:2990px;top:962px;width:40px;height:40px;background:#b6c8b2;"></div>
<div class="a" style="left:2090px;top:712px;width:40px;height:40px;background:#97b191;"></div>
<div class="a" style="left:2640px;top:712px;width:40px;height:40px;background:#97b191;"></div>
<div class="a" style="left:2690px;top:712px;width:40px;height:40px;background:#97b191;"></div>
<div class="a" style="left:2740px;top:712px;width:40px;height:40px;background:#97b191;"></div>
<div class="a" style="left:2790px;top:712px;width:40px;height:40px;background:#97b191;"></div>
<div class="a" style="left:2890px;top:712px;width:40px;height:40px;background:#97b191;"></div>
<div class="a" style="left:2940px;top:712px;width:40px;height:40px;background:#97b191;"></div>
<div class="a" style="left:2990px;top:712px;width:40px;height:40px;background:#97b191;"></div>
<div class="a" style="left:3040px;top:712px;width:40px;height:40px;background:#97b191;"></div>
<div class="a" style="left:3090px;top:712px;width:40px;height:40px;background:#97b191;"></div>
<div class="a" style="left:3140px;top:712px;width:40px;height:40px;background:#97b191;"></div>
<div class="a" style="left:2040px;top:762px;width:40px;height:40px;background:#97b191;"></div>
<div class="a" style="left:2090px;top:762px;width:40px;height:40px;background:#97b191;"></div>
<div class="a" style="left:2490px;top:762px;width:40px;height:40px;background:#97b191;"></div>
<div class="a" style="left:2540px;top:762px;width:40px;height:40px;background:#97b191;"></div>
<div class="a" style="left:2590px;top:762px;width:40px;height:40px;background:#97b191;"></div>
<div class="a" style="left:2790px;top:762px;width:40px;height:40px;background:#97b191;"></div>
<div class="a" style="left:2840px;top:762px;width:40px;height:40px;background:#97b191;"></div>
<div class="a" style="left:2890px;top:762px;width:40px;height:40px;background:#97b191;"></div>
<div class="a" style="left:2940px;top:762px;width:40px;height:40px;background:#97b191;"></div>
<div class="a" style="left:2990px;top:762px;width:40px;height:40px;background:#97b191;"></div>
<div class="a" style="left:3040px;top:762px;width:40px;height:40px;background:#97b191;"></div>
<div class="a" style="left:3140px;top:762px;width:40px;height:40px;background:#97b191;"></div>
<div class="a" style="left:2040px;top:812px;width:40px;height:40px;background:#97b191;"></div>
<div class="a" style="left:2090px;top:812px;width:40px;height:40px;background:#97b191;"></div>
<div class="a" style="left:2490px;top:812px;width:40px;height:40px;background:#97b191;"></div>
<div class="a" style="left:2540px;top:812px;width:40px;height:40px;background:#97b191;"></div>
<div class="a" style="left:2640px;top:812px;width:40px;height:40px;background:#97b191;"></div>
<div class="a" style="left:2690px;top:812px;width:40px;height:40px;background:#97b191;"></div>
<div class="a" style="left:2740px;top:812px;width:40px;height:40px;background:#97b191;"></div>
<div class="a" style="left:2790px;top:812px;width:40px;height:40px;background:#97b191;"></div>
<div class="a" style="left:2840px;top:812px;width:40px;height:40px;background:#97b191;"></div>
<div class="a" style="left:2990px;top:812px;width:40px;height:40px;background:#97b191;"></div>
<div class="a" style="left:3090px;top:812px;width:40px;height:40px;background:#97b191;"></div>
<div class="a" style="left:3140px;top:812px;width:40px;height:40px;background:#97b191;"></div>
<div class="a" style="left:2040px;top:862px;width:40px;height:40px;background:#97b191;"></div>
<div class="a" style="left:2490px;top:862px;width:40px;height:40px;background:#97b191;"></div>
<div class="a" style="left:2540px;top:862px;width:40px;height:40px;background:#97b191;"></div>
<div class="a" style="left:2590px;top:862px;width:40px;height:40px;background:#97b191;"></div>
<div class="a" style="left:2640px;top:862px;width:40px;height:40px;background:#97b191;"></div>
<div class="a" style="left:2740px;top:862px;width:40px;height:40px;background:#97b191;"></div>
<div class="a" style="left:2790px;top:862px;width:40px;height:40px;background:#97b191;"></div>
<div class="a" style="left:2840px;top:862px;width:40px;height:40px;background:#97b191;"></div>
<div class="a" style="left:2990px;top:862px;width:40px;height:40px;background:#97b191;"></div>
<div class="a" style="left:3140px;top:862px;width:40px;height:40px;background:#97b191;"></div>
<div class="a" style="left:2890px;top:912px;width:40px;height:40px;background:#97b191;"></div>
<div class="a" style="left:2940px;top:912px;width:40px;height:40px;background:#97b191;"></div>
<div class="a" style="left:3040px;top:912px;width:40px;height:40px;background:#97b191;"></div>
<div class="a" style="left:3090px;top:912px;width:40px;height:40px;background:#97b191;"></div>
<div class="a" style="left:3140px;top:912px;width:40px;height:40px;background:#97b191;"></div>
<div class="a" style="left:3040px;top:962px;width:40px;height:40px;background:#97b191;"></div>
<div class="a" style="left:3090px;top:962px;width:40px;height:40px;background:#97b191;"></div>
<div class="a" style="left:3140px;top:962px;width:40px;height:40px;background:#97b191;"></div>
<div class="a" style="left:738px;top:1214px;width:1220px;height:620px;background:#fff;border:2px solid #9ba7b2;box-sizing:border-box;"></div>
<div class="a" style="left:817px;top:1191px;width:202px;height:50px;background:#f5f5f5;border:2px solid #9ba7b2;box-sizing:border-box;"></div>
<div class="t" id="t36" style="left:910.50px;top:1199.40px;font-size:30px;color:#475869;">c</div>
<div class="t" id="t37" style="left:777.90px;top:1282.52px;font-size:27.5px;color:#475869;transform:scaleX(0.8985);">CPU</div>
<div class="t" id="t38" style="left:777.86px;top:1324.72px;font-size:27.5px;color:#475869;transform:scaleX(0.9366);">83.35%</div>
<div class="t" id="t39" style="left:945.03px;top:1282.52px;font-size:27.5px;color:#475869;transform:scaleX(1.0352);">Memory</div>
<div class="t" id="t40" style="left:946.17px;top:1324.72px;font-size:27.5px;color:#475869;transform:scaleX(0.9334);">83.35%</div>
<div class="t" id="t41" style="left:1127.28px;top:1284.33px;font-size:27.5px;color:#475869;transform:scaleX(0.9590);">Disk</div>
<div class="t" id="t42" style="left:1128.23px;top:1324.72px;font-size:27.5px;color:#475869;transform:scaleX(0.9688);">3.4 ops</div>
<div class="t" id="t43" style="left:1294.85px;top:1284.33px;font-size:27.5px;color:#475869;transform:scaleX(1.0242);">Network</div>
<div class="t" id="t44" style="left:1295.91px;top:1324.72px;font-size:27.5px;color:#475869;transform:scaleX(0.9862);">94.75 mbps</div>
<svg class="a" style="left:932px;top:1390px;" width="40" height="40" viewBox="0 0 40 40"><rect x="0" y="0" width="40" height="40" fill="#f2f2f2"/><line x1="0" y1="1" x2="40" y2="1" stroke="#bfbfbf" stroke-width="2" stroke-dasharray="10 10"/><line x1="39" y1="0" x2="39" y2="40" stroke="#bfbfbf" stroke-width="2" stroke-dasharray="10 10"/><line x1="40" y1="39" x2="0" y2="39" stroke="#bfbfbf" stroke-width="2" stroke-dasharray="10 10"/><line x1="1" y1="40" x2="1" y2="0" stroke="#bfbfbf" stroke-width="2" stroke-dasharray="10 10"/><line x1="5.3" y1="34.5" x2="34.5" y2="5" stroke="#c3c3c3" stroke-width="3.5"/></svg>
<svg class="a" style="left:982px;top:1390px;" width="40" height="40" viewBox="0 0 40 40"><rect x="0" y="0" width="40" height="40" fill="#f2f2f2"/><line x1="0" y1="1" x2="40" y2="1" stroke="#bfbfbf" stroke-width="2" stroke-dasharray="10 10"/><line x1="39" y1="0" x2="39" y2="40" stroke="#bfbfbf" stroke-width="2" stroke-dasharray="10 10"/><line x1="40" y1="39" x2="0" y2="39" stroke="#bfbfbf" stroke-width="2" stroke-dasharray="10 10"/><line x1="1" y1="40" x2="1" y2="0" stroke="#bfbfbf" stroke-width="2" stroke-dasharray="10 10"/><line x1="5.3" y1="34.5" x2="34.5" y2="5" stroke="#c3c3c3" stroke-width="3.5"/></svg>
<svg class="a" style="left:1032px;top:1390px;" width="40" height="40" viewBox="0 0 40 40"><rect x="0" y="0" width="40" height="40" fill="#f2f2f2"/><line x1="0" y1="1" x2="40" y2="1" stroke="#bfbfbf" stroke-width="2" stroke-dasharray="10 10"/><line x1="39" y1="0" x2="39" y2="40" stroke="#bfbfbf" stroke-width="2" stroke-dasharray="10 10"/><line x1="40" y1="39" x2="0" y2="39" stroke="#bfbfbf" stroke-width="2" stroke-dasharray="10 10"/><line x1="1" y1="40" x2="1" y2="0" stroke="#bfbfbf" stroke-width="2" stroke-dasharray="10 10"/><line x1="5.3" y1="34.5" x2="34.5" y2="5" stroke="#c3c3c3" stroke-width="3.5"/></svg>
<svg class="a" style="left:1082px;top:1390px;" width="40" height="40" viewBox="0 0 40 40"><rect x="0" y="0" width="40" height="40" fill="#f2f2f2"/><line x1="0" y1="1" x2="40" y2="1" stroke="#bfbfbf" stroke-width="2" stroke-dasharray="10 10"/><line x1="39" y1="0" x2="39" y2="40" stroke="#bfbfbf" stroke-width="2" stroke-dasharray="10 10"/><line x1="40" y1="39" x2="0" y2="39" stroke="#bfbfbf" stroke-width="2" stroke-dasharray="10 10"/><line x1="1" y1="40" x2="1" y2="0" stroke="#bfbfbf" stroke-width="2" stroke-dasharray="10 10"/><line x1="5.3" y1="5" x2="34.5" y2="34.5" stroke="#c3c3c3" stroke-width="3.5"/></svg>
<svg class="a" style="left:1132px;top:1390px;" width="40" height="40" viewBox="0 0 40 40"><rect x="0" y="0" width="40" height="40" fill="#f2f2f2"/><line x1="0" y1="1" x2="40" y2="1" stroke="#bfbfbf" stroke-width="2" stroke-dasharray="10 10"/><line x1="39" y1="0" x2="39" y2="40" stroke="#bfbfbf" stroke-width="2" stroke-dasharray="10 10"/><line x1="40" y1="39" x2="0" y2="39" stroke="#bfbfbf" stroke-width="2" stroke-dasharray="10 10"/><line x1="1" y1="40" x2="1" y2="0" stroke="#bfbfbf" stroke-width="2" stroke-dasharray="10 10"/><line x1="5.3" y1="5" x2="34.5" y2="34.5" stroke="#c3c3c3" stroke-width="3.5"/></svg>
<div class="a" style="left:1332px;top:1390px;width:240px;height:240px;background:#c98a98;"></div>
<div class="a" style="left:1082px;top:1440px;width:90px;height:90px;background:#c3d1bf;"></div>
<div class="a" style="left:1232px;top:1440px;width:40px;height:40px;background:#c3d1bf;"></div>
<div class="a" style="left:882px;top:1490px;width:40px;height:40px;background:#c3d1bf;"></div>
<div class="a" style="left:1032px;top:1490px;width:40px;height:40px;background:#c3d1bf;"></div>
<div class="a" style="left:1682px;top:1490px;width:40px;height:40px;background:#c3d1bf;"></div>
<div class="a" style="left:782px;top:1540px;width:40px;height:40px;background:#c3d1bf;"></div>
<div class="a" style="left:982px;top:1540px;width:40px;height:40px;background:#c3d1bf;"></div>
<div class="a" style="left:1082px;top:1540px;width:90px;height:90px;background:#cbd8c8;"></div>
<div class="a" style="left:1632px;top:1540px;width:40px;height:40px;background:#e0b987;"></div>
<div class="a" style="left:882px;top:1590px;width:40px;height:40px;background:#c3d1bf;"></div>
<div class="a" style="left:782px;top:1390px;width:40px;height:40px;background:#97b191;"></div>
<div class="a" style="left:832px;top:1390px;width:40px;height:40px;background:#97b191;"></div>
<div class="a" style="left:882px;top:1390px;width:40px;height:40px;background:#97b191;"></div>
<div class="a" style="left:1182px;top:1390px;width:40px;height:40px;background:#97b191;"></div>
<div class="a" style="left:1232px;top:1390px;width:40px;height:40px;background:#97b191;"></div>
<div class="a" style="left:1282px;top:1390px;width:40px;height:40px;background:#97b191;"></div>
<div class="a" style="left:1582px;top:1390px;width:40px;height:40px;background:#97b191;"></div>
<div class="a" style="left:1632px;top:1390px;width:40px;height:40px;background:#97b191;"></div>
<div class="a" style="left:1682px;top:1390px;width:40px;height:40px;background:#97b191;"></div>
<div class="a" style="left:1732px;top:1390px;width:40px;height:40px;background:#97b191;"></div>
<div class="a" style="left:782px;top:1440px;width:40px;height:40px;background:#97b191;"></div>
<div class="a" style="left:832px;top:1440px;width:40px;height:40px;background:#97b191;"></div>
<div class="a" style="left:882px;top:1440px;width:40px;height:40px;background:#97b191;"></div>
<div class="a" style="left:932px;top:1440px;width:40px;height:40px;background:#97b191;"></div>
<div class="a" style="left:982px;top:1440px;width:40px;height:40px;background:#97b191;"></div>
<div class="a" style="left:1032px;top:1440px;width:40px;height:40px;background:#97b191;"></div>
<div class="a" style="left:1182px;top:1440px;width:40px;height:40px;background:#97b191;"></div>
<div class="a" style="left:1282px;top:1440px;width:40px;height:40px;background:#97b191;"></div>
<div class="a" style="left:1582px;top:1440px;width:40px;height:40px;background:#97b191;"></div>
<div class="a" style="left:1632px;top:1440px;width:40px;height:40px;background:#97b191;"></div>
<div class="a" style="left:1682px;top:1440px;width:40px;height:40px;background:#97b191;"></div>
<div class="a" style="left:1732px;top:1440px;width:40px;height:40px;background:#97b191;"></div>
<div class="a" style="left:782px;top:1490px;width:40px;height:40px;background:#97b191;"></div>
<div class="a" style="left:832px;top:1490px;width:40px;height:40px;background:#97b191;"></div>
<div class="a" style="left:932px;top:1490px;width:40px;height:40px;background:#97b191;"></div>
<div class="a" style="left:982px;top:1490px;width:40px;height:40px;background:#97b191;"></div>
<div class="a" style="left:1182px;top:1490px;width:40px;height:40px;background:#97b191;"></div>
<div class="a" style="left:1232px;top:1490px;width:40px;height:40px;background:#97b191;"></div>
<div class="a" style="left:1282px;top:1490px;width:40px;height:40px;background:#97b191;"></div>
<div class="a" style="left:1582px;top:1490px;width:40px;height:40px;background:#97b191;"></div>
<div class="a" style="left:1632px;top:1490px;width:40px;height:40px;background:#97b191;"></div>
<div class="a" style="left:1732px;top:1490px;width:40px;height:40px;background:#97b191;"></div>
<div class="a" style="left:832px;top:1540px;width:40px;height:40px;background:#97b191;"></div>
<div class="a" style="left:882px;top:1540px;width:40px;height:40px;background:#97b191;"></div>
<div class="a" style="left:932px;top:1540px;width:40px;height:40px;background:#97b191;"></div>
<div class="a" style="left:1032px;top:1540px;width:40px;height:40px;background:#97b191;"></div>
<div class="a" style="left:1182px;top:1540px;width:40px;height:40px;background:#97b191;"></div>
<div class="a" style="left:1232px;top:1540px;width:40px;height:40px;background:#97b191;"></div>
<div class="a" style="left:1282px;top:1540px;width:40px;height:40px;background:#97b191;"></div>
<div class="a" style="left:1582px;top:1540px;width:40px;height:40px;background:#97b191;"></div>
<div class="a" style="left:1682px;top:1540px;width:40px;height:40px;background:#97b191;"></div>
<div class="a" style="left:1732px;top:1540px;width:40px;height:40px;background:#97b191;"></div>
<div class="a" style="left:782px;top:1590px;width:40px;height:40px;background:#97b191;"></div>
<div class="a" style="left:832px;top:1590px;width:40px;height:40px;background:#97b191;"></div>
<div class="a" style="left:932px;top:1590px;width:40px;height:40px;background:#97b191;"></div>
<div class="a" style="left:982px;top:1590px;width:40px;height:40px;background:#97b191;"></div>
<div class="a" style="left:1032px;top:1590px;width:40px;height:40px;background:#97b191;"></div>
<div class="a" style="left:1182px;top:1590px;width:40px;height:40px;background:#97b191;"></div>
<div class="a" style="left:1232px;top:1590px;width:40px;height:40px;background:#97b191;"></div>
<div class="a" style="left:1282px;top:1590px;width:40px;height:40px;background:#97b191;"></div>
<div class="a" style="left:1582px;top:1590px;width:40px;height:40px;background:#97b191;"></div>
<div class="a" style="left:1632px;top:1590px;width:40px;height:40px;background:#97b191;"></div>
<div class="a" style="left:1996px;top:1216px;width:1220px;height:620px;background:#fff;border:2px solid #9ba7b2;box-sizing:border-box;"></div>
<svg class="a" style="left:3139px;top:1230px;" width="56" height="50" viewBox="0 0 56 50"><path d="M12.5 37.6 Q 18.6 31 18.6 24 L 18.6 20.5 Q 18.6 11.9 27.9 11.9 Q 37.2 11.9 37.2 20.5 L 37.2 24 Q 37.2 31 43.3 37.6 Z" fill="none" stroke="#3f5266" stroke-width="2.3" stroke-linejoin="round"/><circle cx="27.9" cy="9.3" r="1.9" fill="#3f5266"/><path d="M22.6 38.5 A 5.3 5.3 0 0 0 33.2 38.5 Z" fill="#3f5266"/><path d="M24.3 39.6 Q 24.9 41.9 27.4 42.4" fill="none" stroke="#fff" stroke-width="0.8"/></svg>
<div class="a" style="left:2890px;top:1492px;width:90px;height:90px;background:#c98a98;"></div>
<div class="a" style="left:2990px;top:1642px;width:40px;height:40px;background:#c3d1bf;"></div>
<div class="a" style="left:2890px;top:1392px;width:40px;height:40px;background:#97b191;"></div>
<div class="a" style="left:2940px;top:1392px;width:40px;height:40px;background:#97b191;"></div>
<div class="a" style="left:2990px;top:1392px;width:40px;height:40px;background:#97b191;"></div>
<div class="a" style="left:3040px;top:1392px;width:40px;height:40px;background:#97b191;"></div>
<div class="a" style="left:3090px;top:1392px;width:40px;height:40px;background:#97b191;"></div>
<div class="a" style="left:3140px;top:1392px;width:40px;height:40px;background:#97b191;"></div>
<div class="a" style="left:2890px;top:1442px;width:40px;height:40px;background:#97b191;"></div>
<div class="a" style="left:2940px;top:1442px;width:40px;height:40px;background:#97b191;"></div>
<div class="a" style="left:2990px;top:1442px;width:40px;height:40px;background:#97b191;"></div>
<div class="a" style="left:3040px;top:1442px;width:40px;height:40px;background:#97b191;"></div>
<div class="a" style="left:3090px;top:1442px;width:40px;height:40px;background:#97b191;"></div>
<div class="a" style="left:3140px;top:1442px;width:40px;height:40px;background:#97b191;"></div>
<div class="a" style="left:2990px;top:1492px;width:40px;height:40px;background:#97b191;"></div>
<div class="a" style="left:3040px;top:1492px;width:40px;height:40px;background:#97b191;"></div>
<div class="a" style="left:3090px;top:1492px;width:40px;height:40px;background:#97b191;"></div>
<div class="a" style="left:3140px;top:1492px;width:40px;height:40px;background:#97b191;"></div>
<div class="a" style="left:2990px;top:1542px;width:40px;height:40px;background:#97b191;"></div>
<div class="a" style="left:3040px;top:1542px;width:40px;height:40px;background:#97b191;"></div>
<div class="a" style="left:3090px;top:1542px;width:40px;height:40px;background:#97b191;"></div>
<div class="a" style="left:3140px;top:1542px;width:40px;height:40px;background:#97b191;"></div>
<div class="a" style="left:2890px;top:1592px;width:40px;height:40px;background:#97b191;"></div>
<div class="a" style="left:2940px;top:1592px;width:40px;height:40px;background:#97b191;"></div>
<div class="a" style="left:2990px;top:1592px;width:40px;height:40px;background:#97b191;"></div>
<div class="a" style="left:3040px;top:1592px;width:40px;height:40px;background:#97b191;"></div>
<div class="a" style="left:3090px;top:1592px;width:40px;height:40px;background:#97b191;"></div>
<div class="a" style="left:3140px;top:1592px;width:40px;height:40px;background:#97b191;"></div>
<div class="a" style="left:2890px;top:1642px;width:40px;height:40px;background:#97b191;"></div>
<div class="a" style="left:2940px;top:1642px;width:40px;height:40px;background:#97b191;"></div>
<div class="a" style="left:3040px;top:1642px;width:40px;height:40px;background:#97b191;"></div>
<div class="a" style="left:3090px;top:1642px;width:40px;height:40px;background:#97b191;"></div>
<div class="a" style="left:3140px;top:1642px;width:40px;height:40px;background:#97b191;"></div>
<div class="a" style="left:2890px;top:1692px;width:40px;height:40px;background:#97b191;"></div>
<div class="a" style="left:2940px;top:1692px;width:40px;height:40px;background:#97b191;"></div>
<div class="a" style="left:2990px;top:1692px;width:40px;height:40px;background:#97b191;"></div>
<div class="a" style="left:738px;top:1994px;width:800px;height:460px;background:#b1b8c2;"></div>
<svg class="a" style="left:738px;top:1994px;" width="800" height="460" viewBox="0 0 800 460"><line x1="147.0" y1="84.5" x2="653.0" y2="375.5" stroke="#cdd2d8" stroke-width="1.6"/><line x1="147.0" y1="375.5" x2="653.0" y2="84.5" stroke="#cdd2d8" stroke-width="1.6"/></svg>
<div class="t" id="t45" style="left:886.96px;top:2193.76px;font-size:47.7px;color:#ffffff;transform:scaleX(1.0129);">Top Containers by Host</div>
<div class="a" style="left:1578px;top:1994px;width:800px;height:460px;background:#b1b8c2;"></div>
<svg class="a" style="left:1578px;top:1994px;" width="800" height="460" viewBox="0 0 800 460"><line x1="147.0" y1="84.5" x2="653.0" y2="375.5" stroke="#cdd2d8" stroke-width="1.6"/><line x1="147.0" y1="375.5" x2="653.0" y2="84.5" stroke="#cdd2d8" stroke-width="1.6"/></svg>
<div class="t" id="t46" style="left:1723.61px;top:2154.05px;font-size:47.7px;color:#ffffff;transform:scaleX(0.9932);">Top Containers by CPU /</div>
<div class="t" id="t47" style="left:1866.20px;top:2217.25px;font-size:47.7px;color:#ffffff;transform:scaleX(0.9114);">Just CPU %</div>
<div class="a" style="left:2418px;top:1994px;width:800px;height:460px;background:#b1b8c2;"></div>
<svg class="a" style="left:2418px;top:1994px;" width="800" height="460" viewBox="0 0 800 460"><line x1="147.0" y1="84.5" x2="653.0" y2="375.5" stroke="#cdd2d8" stroke-width="1.6"/><line x1="147.0" y1="375.5" x2="653.0" y2="84.5" stroke="#cdd2d8" stroke-width="1.6"/></svg>
<div class="t" id="t48" style="left:2655.22px;top:2199.15px;font-size:47.7px;color:#ffffff;transform:scaleX(1.0069);">Memory Usage</div>
<div class="a" style="left:1744px;top:912px;width:1140px;height:1100px;background:#fff;border:2px solid #9ba7b2;box-sizing:border-box;"></div>
<svg class="a" style="left:2290px;top:884px;" width="50" height="30" viewBox="0 0 50 30"><polygon points="4.8,28.5 24.7,3.8 45.2,28.5" fill="#fff" stroke="#9ba7b2" stroke-width="2" stroke-linejoin="miter"/><rect x="6.6" y="28" width="36.8" height="2" fill="#fff"/></svg>
<div class="t" id="t49" style="left:1792.97px;top:970.35px;font-size:31px;color:#475869;transform:scaleX(1.0158);">Host / Instance Name</div>
<div class="a" style="left:2392px;top:962px;width:140px;height:48px;background:#f8f8f8;border:2px solid #e3e3e3;box-sizing:border-box;"></div>
<div class="t" id="t50" style="left:2413.74px;top:972.97px;font-size:24.5px;color:#8d969f;transform:scaleX(0.9616);">container</div>
<div class="t" id="t51" style="left:2552.90px;top:971.66px;font-size:26.4px;color:#475869;transform:scaleX(1.0510);">Linux</div>
<div class="a" style="left:2644px;top:952px;width:200px;height:70px;background:#fff;border:2.5px solid #3e5266;box-sizing:border-box;"></div>
<div class="t" id="t52" style="left:2667.00px;top:975.64px;font-size:26.3px;color:#475869;-webkit-text-stroke:0.75px currentColor;transform:scaleX(1.0551);">View Details</div>
<div class="a" style="left:1792px;top:1038px;width:130px;height:48px;background:#97a3ae;border-radius:10px;"></div>
<div class="t" id="t53" style="left:1815.48px;top:1049.54px;font-size:24.9px;color:#ffffff;transform:scaleX(0.9375);">host tag</div>
<div class="a" style="left:1928px;top:1038px;width:130px;height:48px;background:#97a3ae;border-radius:10px;"></div>
<div class="t" id="t54" style="left:1951.48px;top:1049.54px;font-size:24.9px;color:#ffffff;transform:scaleX(0.9375);">host tag</div>
<div class="a" style="left:2064px;top:1038px;width:130px;height:48px;background:#97a3ae;border-radius:10px;"></div>
<div class="t" id="t55" style="left:2087.48px;top:1049.54px;font-size:24.9px;color:#ffffff;transform:scaleX(0.9375);">host tag</div>
<svg class="a" style="left:2200px;top:1040px;" width="45" height="40" viewBox="0 0 45 40"><polygon points="22.6,12.3 28.9,18.3 16.6,31.6 10,31.8 10,25.1" fill="#475869"/><path d="M23.9 11.7 L26.7 8.8 Q27.5 8.0 28.3 8.8 L33.3 13.6 Q34.1 14.4 33.3 15.2 L29.7 18.1 Z" fill="#475869"/><line x1="15.3" y1="23.6" x2="23.6" y2="15.1" stroke="#fff" stroke-width="0.9" stroke-dasharray="1 0.6"/><polygon points="12.3,25.6 13.7,24.6 16.9,28.3 15.3,30 13.9,28.5" fill="#fff"/></svg>
<div class="t" id="t56" style="left:2689.70px;top:1115.04px;font-size:27.6px;color:#8a949e;font-style:italic;transform:scaleX(0.8642);">Past 2 weeks</div>
<div class="a" style="left:1794.5px;top:1146.5px;width:500px;height:119px;background:#fff;border:2px solid #9ba7b2;box-sizing:border-box;"></div>
<svg class="a" style="left:1794.5px;top:1146.5px;" width="500" height="120" viewBox="0 0 500 120"><polyline fill="none" stroke="#687a89" stroke-width="3.4" points="102.7,65.5 131.3,65.5 187.4,51.1 210.9,65.8 313.9,36.6 335,51.4 382.8,65.8 432.5,51.1 458.2,65.5"/></svg>
<div class="t" id="t57" style="left:1834.87px;top:1226.06px;font-size:22.4px;color:#8f9ba6;transform:scaleX(0.9337);">1K</div>
<div class="t" id="t58" style="left:1835.00px;top:1285.96px;font-size:22.4px;color:#8f9ba6;transform:scaleX(0.9755);">400</div>
<div class="a" style="left:2334px;top:1148.5px;width:500px;height:119px;background:#fff;border:2px solid #9ba7b2;box-sizing:border-box;"></div>
<svg class="a" style="left:2334px;top:1148.5px;" width="500" height="120" viewBox="0 0 500 120"><polyline fill="none" stroke="#687a89" stroke-width="3.4" points="102.7,65.5 131.3,65.5 187.4,51.1 210.9,65.8 313.9,36.6 335,51.4 382.8,65.8 432.5,51.1 458.2,65.5"/></svg>
<div class="t" id="t59" style="left:2374.37px;top:1228.06px;font-size:22.4px;color:#8f9ba6;transform:scaleX(0.9337);">1K</div>
<div class="t" id="t60" style="left:2374.50px;top:1287.96px;font-size:22.4px;color:#8f9ba6;transform:scaleX(0.9755);">400</div>
<div class="a" style="left:1798.5px;top:1352.5px;width:500px;height:119px;background:#fff;border:2px solid #9ba7b2;box-sizing:border-box;"></div>
<svg class="a" style="left:1798.5px;top:1352.5px;" width="500" height="120" viewBox="0 0 500 120"><polyline fill="none" stroke="#687a89" stroke-width="3.4" points="102.7,65.5 131.3,65.5 187.4,51.1 210.9,65.8 313.9,36.6 335,51.4 382.8,65.8 432.5,51.1 458.2,65.5"/></svg>
<div class="t" id="t61" style="left:1838.87px;top:1432.06px;font-size:22.4px;color:#8f9ba6;transform:scaleX(0.9337);">1K</div>
<div class="t" id="t62" style="left:1839.00px;top:1491.96px;font-size:22.4px;color:#8f9ba6;transform:scaleX(0.9755);">400</div>
<div class="a" style="left:2334px;top:1354.5px;width:500px;height:119px;background:#fff;border:2px solid #9ba7b2;box-sizing:border-box;"></div>
<svg class="a" style="left:2334px;top:1354.5px;" width="500" height="120" viewBox="0 0 500 120"><polyline fill="none" stroke="#687a89" stroke-width="3.4" points="102.7,65.5 131.3,65.5 187.4,51.1 210.9,65.8 313.9,36.6 335,51.4 382.8,65.8 432.5,51.1 458.2,65.5"/></svg>
<div class="t" id="t63" style="left:2374.37px;top:1434.06px;font-size:22.4px;color:#8f9ba6;transform:scaleX(0.9337);">1K</div>
<div class="t" id="t64" style="left:2374.50px;top:1493.96px;font-size:22.4px;color:#8f9ba6;transform:scaleX(0.9755);">400</div>
<div class="t" id="t65" style="left:1801.43px;top:1608.44px;font-size:28.3px;color:#475869;transform:scaleX(0.9697);">Container</div>
<div class="t" id="t66" style="left:2060.99px;top:1643.03px;font-size:27.5px;color:#3f3f3f;transform:scaleX(1.0132);">id/name: name</div>
<div class="t" id="t67" style="left:2061.02px;top:1678.92px;font-size:27.5px;color:#3f3f3f;transform:scaleX(0.9823);">running service(s):</div>
<div class="t" id="t68" style="left:2062.98px;top:1714.83px;font-size:27.5px;color:#4a90e2;transform:scaleX(0.9764);">web 07</div>
<div class="a" style="left:2634px;top:1612px;width:200px;height:70px;background:#fff;border:2.5px solid #3e5266;box-sizing:border-box;"></div>
<div class="t" id="t69" style="left:2657.40px;top:1635.05px;font-size:26.3px;color:#475869;-webkit-text-stroke:0.75px currentColor;transform:scaleX(1.0572);">View Details</div>
<svg class="a" style="left:1795px;top:1640px;" width="205" height="305" viewBox="0 0 205 305"><polygon points="21,183.4 102.4,153.4 183.8,183.4 183.8,246.9 102.4,276.9 21,246.9" fill="#d7dce3" stroke="#979797" stroke-width="1.7" stroke-linejoin="round"/><polygon points="21,183.4 102.4,153.4 183.8,183.4 102.4,213.4" fill="#aeb5bf" stroke="#979797" stroke-width="1.7" stroke-linejoin="round"/><polyline points="21,193.98333333333335 102.4,223.98333333333335 183.8,193.98333333333335" fill="none" stroke="#979797" stroke-width="1.7"/><polyline points="21,204.56666666666666 102.4,234.56666666666666 183.8,204.56666666666666" fill="none" stroke="#979797" stroke-width="1.7"/><polyline points="21,215.14999999999998 102.4,245.14999999999998 183.8,215.14999999999998" fill="none" stroke="#979797" stroke-width="1.7"/><polyline points="21,225.73333333333332 102.4,255.73333333333332 183.8,225.73333333333332" fill="none" stroke="#979797" stroke-width="1.7"/><polyline points="21,236.31666666666666 102.4,266.31666666666666 183.8,236.31666666666666" fill="none" stroke="#979797" stroke-width="1.7"/><polygon points="21,139.3 102.4,109.30000000000001 183.8,139.3 183.8,171.3 102.4,201.3 21,171.3" fill="#9db4cb" stroke="#979797" stroke-width="1.7" stroke-linejoin="round"/><polygon points="21,139.3 102.4,109.30000000000001 183.8,139.3 102.4,169.3" fill="#88a0b8" stroke="#979797" stroke-width="1.7" stroke-linejoin="round"/><polygon points="21,64.1 102.4,34.099999999999994 183.8,64.1 183.8,126.7 102.4,156.7 21,126.7" fill="#d7dce3" stroke="#979797" stroke-width="1.7" stroke-linejoin="round"/><polygon points="21,64.1 102.4,34.099999999999994 183.8,64.1 102.4,94.1" fill="#aeb5bf" stroke="#979797" stroke-width="1.7" stroke-linejoin="round"/><polyline points="21,74.53333333333333 102.4,104.53333333333333 183.8,74.53333333333333" fill="none" stroke="#979797" stroke-width="1.7"/><polyline points="21,84.96666666666665 102.4,114.96666666666665 183.8,84.96666666666665" fill="none" stroke="#979797" stroke-width="1.7"/><polyline points="21,95.39999999999999 102.4,125.39999999999999 183.8,95.39999999999999" fill="none" stroke="#979797" stroke-width="1.7"/><polyline points="21,105.83333333333331 102.4,135.83333333333331 183.8,105.83333333333331" fill="none" stroke="#979797" stroke-width="1.7"/><polyline points="21,116.26666666666665 102.4,146.26666666666665 183.8,116.26666666666665" fill="none" stroke="#979797" stroke-width="1.7"/><polygon points="9.6,45.6 102.4,11.1 195.2,45.6 102.4,80" fill="none" stroke="#979797" stroke-width="1.7"/><polyline points="12.4,45.6 12.4,261.9 102.4,295.7 192.4,261.9 192.4,45.6" fill="none" stroke="#979797" stroke-width="1.7"/></svg>
<div class="a" style="left:406px;top:882px;width:378px;height:4px;background:#b4bbc4;"></div>
<svg class="a" style="left:781px;top:871px;" width="27" height="27" viewBox="0 0 27 27"><circle cx="13.3" cy="13" r="9.8" fill="#fff" stroke="#b4bbc4" stroke-width="3.5"/></svg>
<div class="a" style="left:406px;top:2080px;width:380px;height:4px;background:#b4bbc4;"></div>
<svg class="a" style="left:783px;top:2071px;" width="21" height="21" viewBox="0 0 21 21"><circle cx="10.4" cy="10.5" r="8" fill="#fff"/></svg>
<div class="a" style="left:2868px;top:930px;width:478px;height:4px;background:#b4bbc4;"></div>
<svg class="a" style="left:2845px;top:919px;" width="27" height="27" viewBox="0 0 27 27"><circle cx="12.7" cy="13" r="9.8" fill="#fff" stroke="#b4bbc4" stroke-width="3.5"/></svg>
<div class="t" id="t70" style="left:23.80px;top:41.38px;font-size:46.5px;color:#969696;transform:scaleX(0.9324);">Host Map</div>
<div class="t" id="t71" style="left:2871.63px;top:-2.22px;font-size:27.2px;color:#5e5e5e;transform:scaleX(0.9656);">Could these be updated in real time?</div>
<div class="t" id="t72" style="left:10.72px;top:866.46px;font-size:26.4px;color:#5e5e5e;transform:scaleX(0.9894);">Each square represents a host</div>
<div class="t" id="t73" style="left:11.70px;top:906.36px;font-size:26.4px;color:#5e5e5e;">instance</div>
<div class="t" id="t74" style="left:14.80px;top:960.66px;font-size:26.4px;color:#5e5e5e;transform:scaleX(0.9790);">Alternative</div>
<div class="a" style="left:16px;top:1002px;width:40px;height:40px;background:#fff;border:2px solid #8e8e8e;box-sizing:border-box;"></div>
<div class="a" style="left:18px;top:1030px;width:36px;height:10px;background:#97b191;"></div>
<div class="a" style="left:64px;top:1002px;width:40px;height:40px;background:#fff;border:2px solid #8e8e8e;box-sizing:border-box;"></div>
<div class="a" style="left:66px;top:1020px;width:36px;height:20px;background:#e0b987;"></div>
<div class="t" id="t75" style="left:11.72px;top:2075.36px;font-size:26.4px;color:#5e5e5e;transform:scaleX(0.9797);">Content TBD: Top Processes by</div>
<div class="t" id="t76" style="left:10.70px;top:2114.86px;font-size:26.4px;color:#5e5e5e;">Network also good to know…</div>
<div class="t" id="t77" style="left:3358.63px;top:918.94px;font-size:27.6px;color:#5e5e5e;transform:scaleX(0.9333);">Host Summary View</div>
<div class="t" id="t78" style="left:3360.50px;top:999.34px;font-size:27.6px;color:#5e5e5e;transform:scaleX(0.9559);">View Details buttons open panel at</div>
<div class="t" id="t79" style="left:3359.55px;top:1039.24px;font-size:27.6px;color:#5e5e5e;transform:scaleX(0.9549);">right with Host Details or Container</div>
<div class="t" id="t80" style="left:3358.62px;top:1079.04px;font-size:27.6px;color:#5e5e5e;transform:scaleX(0.9395);">Details Views</div>
<div class="t" id="t81" style="left:3354.81px;top:1326.84px;font-size:27.6px;color:#5e5e5e;transform:scaleX(0.9444);">IDEA: Up-level container summary</div>
<div class="t" id="t82" style="left:3355.76px;top:1367.44px;font-size:27.6px;color:#5e5e5e;transform:scaleX(0.9449);">data here, as well, with link to</div>
<div class="t" id="t83" style="left:3355.77px;top:1407.34px;font-size:27.6px;color:#5e5e5e;transform:scaleX(0.9333);">Container Detail View</div>
<div class="t" id="t84" style="left:-6.09px;top:420.00px;font-size:28.7px;color:#475869;transform:scaleX(1.0470);">Filter by:</div>
<div class="a" style="left:126px;top:404px;width:350px;height:313px;background:#fff;border:2px solid #5a6b7b;box-sizing:border-box;"></div>
<div class="a" style="left:126px;top:461px;width:350px;height:2px;background:#5a6b7b;"></div>
<div class="a" style="left:140px;top:415px;width:2px;height:37px;background:#000;"></div>
<div class="t" id="t85" style="left:152.07px;top:420.60px;font-size:28px;color:#a6a6a6;transform:scaleX(0.9349);">Search names...</div>
<div class="t" id="t86" style="left:149.00px;top:480.70px;font-size:28px;color:#475869;">*</div>
<div class="t" id="t87" style="left:148.04px;top:530.70px;font-size:28px;color:#475869;transform:scaleX(0.9611);">availibilty_zone</div>
<div class="t" id="t88" style="left:148.01px;top:566.70px;font-size:28px;color:#475869;transform:scaleX(0.9925);">region</div>
<div class="t" id="t89" style="left:149.00px;top:603.00px;font-size:28px;color:#475869;transform:scaleX(0.9306);">service</div>
<div class="t" id="t90" style="left:147.00px;top:639.70px;font-size:28px;color:#475869;">...</div>
<svg class="a" style="left:492px;top:422px;" width="26" height="26" viewBox="0 0 26 26"><circle cx="12.7" cy="12.7" r="12.7" fill="#5a6b7b"/><path d="M15.3 16.6 C16.5 14.6 18 13.8 20 13.8 C22.5 13.8 24 15.3 24 17.3 C24 19.5 21.5 20.3 20.3 21.6 C19.9 22.1 19.8 22.6 19.8 23.8" transform="translate(-7.3,-8)" fill="none" stroke="#fff" stroke-width="4.3"/><rect x="10.3" y="16.9" width="4.5" height="4.3" fill="#fff"/></svg>
<svg class="a" style="left:2300px;top:835px;" width="70" height="80" viewBox="0 0 70 80"><path d="M26 27 L26 13.75 A5.1 5.1 0 0 1 36.2 13.75 L36.2 21.5 C42 21.5 47.5 22.5 50.5 23.8 C54 25.5 53.8 29.5 52.8 33 L49.6 45.5 L29.5 45.5 C29 40.5 24 37.5 18 34 C14.5 32 14.8 25.5 19.5 25.3 C22 25.2 24 26 26 27 Z" fill="#fff" stroke="#475869" stroke-width="3.3" stroke-linejoin="round"/><rect x="28.1" y="44.5" width="23.6" height="10.2" rx="2.2" fill="#475869"/><circle cx="46.4" cy="49.7" r="1.75" fill="#abc2a9"/></svg>
</body></html>
